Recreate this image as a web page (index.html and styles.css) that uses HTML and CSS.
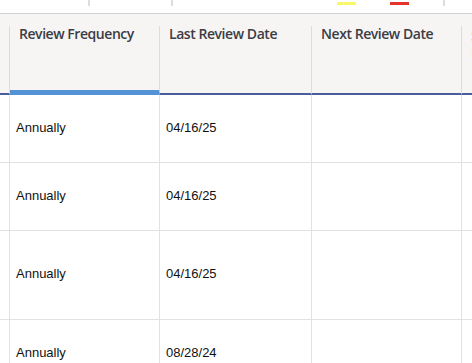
FILE: index.html
```html
<!DOCTYPE html>
<html lang="en">
<head>
<meta charset="utf-8">
<title>Review schedule</title>
<link rel="stylesheet" href="styles.css">
</head>
<body>
<div class="page">
  <div class="prev-row">
    <span class="tick tick-a"></span>
    <span class="tick tick-b"></span>
    <span class="bar bar-yellow"></span>
    <span class="bar bar-red"></span>
    <span class="tick tick-c"></span>
  </div>
  <div class="table">
    <div class="head">
      <div class="th th-edge"></div>
      <div class="th th-active">Review Frequency</div>
      <div class="th">Last Review Date</div>
      <div class="th">Next Review Date</div>
      <div class="th th-clip">Summary Notes</div>
    </div>
    <div class="row r-std">
      <div class="td"></div>
      <div class="td">Annually</div>
      <div class="td">04/16/25</div>
      <div class="td"></div>
      <div class="td"></div>
    </div>
    <div class="row r-std">
      <div class="td"></div>
      <div class="td">Annually</div>
      <div class="td">04/16/25</div>
      <div class="td"></div>
      <div class="td"></div>
    </div>
    <div class="row r-tall">
      <div class="td"></div>
      <div class="td">Annually</div>
      <div class="td">04/16/25</div>
      <div class="td"></div>
      <div class="td"></div>
    </div>
    <div class="row r-std">
      <div class="td"></div>
      <div class="td">Annually</div>
      <div class="td">08/28/24</div>
      <div class="td"></div>
      <div class="td"></div>
    </div>
  </div>
</div>
</body>
</html>
```
FILE: styles.css
```css
* { box-sizing: border-box; }
html, body {
  margin: 0;
  padding: 0;
  width: 472px;
  height: 363px;
  overflow: hidden;
  background: #ffffff;
}
.page {
  width: 472px;
  height: 363px;
  overflow: hidden;
}
.prev-row {
  display: flex;
  align-items: flex-start;
  height: 14px;
  border-bottom: 1px solid #d3d3d3;
}
.tick {
  width: 2px;
  height: 6px;
  background: #dcdcdc;
  flex: none;
}
.tick-a { margin-left: 88px; }
.tick-b { margin-left: 81px; }
.bar {
  height: 3px;
  width: 19px;
  margin-top: 2px;
  flex: none;
}
.bar-yellow { background: #f8f86a; margin-left: 164px; }
.bar-red { background: #e4332a; margin-left: 34px; }
.tick-c { margin-left: 34px; }

.head, .row {
  display: grid;
  grid-template-columns: 10px 150px 152px 150px 1fr;
}
.head {
  background: #f6f5f3;
  padding-top: 12px;
}
.th {
  height: 69px;
  border-right: 1px solid #dedcd9;
  border-bottom: 2px solid #4a5e9b;
  padding-left: 9px;
  padding-top: 0;
  font-family: "Open Sans", "Noto Sans", sans-serif;
  font-weight: 600;
  font-size: 14px;
  letter-spacing: -0.45px;
  line-height: 16px;
  color: #3c3c46;
  white-space: nowrap;
}
.th-edge { padding-left: 0; }
.th-active { border-bottom: 5px solid #5492d6; }
.th-clip { white-space: normal; border-right: none; color: #c9c29a; padding-top: 1px; line-height: 17px; }

.row .td {
  border-right: 1px solid #e2e2e2;
  border-bottom: 1px solid #e2e2e2;
  display: flex;
  align-items: center;
  padding-left: 6px;
  padding-bottom: 2px;
  font-family: "Liberation Sans", Arial, sans-serif;
  font-size: 13px;
  color: #111111;
  white-space: nowrap;
}
.row .td:first-child { padding-left: 0; }
.row .td:last-child { border-right: none; }
.r-std { height: 68px; }
.r-tall { height: 89px; }
.r-tall .td { padding-bottom: 4px; }
```
